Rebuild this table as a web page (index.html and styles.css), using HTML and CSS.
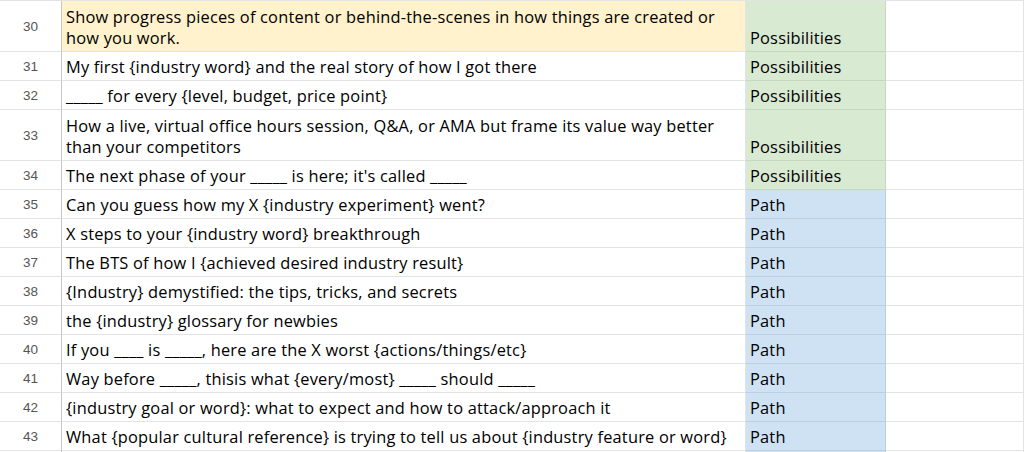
FILE: index.html
```html
<!DOCTYPE html>
<html>
<head>
<meta charset="utf-8">
<link rel="stylesheet" href="styles.css">
</head>
<body>
<div class="sheet">
  <div class="row tall"><div class="num">30</div><div class="cell yellow">Show progress pieces of content or behind-the-scenes in how things are created or how you work.</div><div class="cell green">Possibilities</div><div class="cell"></div></div>
  <div class="row"><div class="num">31</div><div class="cell">My first {industry word} and the real story of how I got there</div><div class="cell green">Possibilities</div><div class="cell"></div></div>
  <div class="row"><div class="num">32</div><div class="cell">_____ for every {level, budget, price point}</div><div class="cell green">Possibilities</div><div class="cell"></div></div>
  <div class="row tall"><div class="num">33</div><div class="cell">How a live, virtual office hours session, Q&amp;A, or AMA but frame its value way better than your competitors</div><div class="cell green">Possibilities</div><div class="cell"></div></div>
  <div class="row"><div class="num">34</div><div class="cell">The next phase of your _____ is here; it's called _____</div><div class="cell green">Possibilities</div><div class="cell"></div></div>
  <div class="row"><div class="num">35</div><div class="cell">Can you guess how my X {industry experiment} went?</div><div class="cell blue">Path</div><div class="cell"></div></div>
  <div class="row"><div class="num">36</div><div class="cell">X steps to your {industry word} breakthrough</div><div class="cell blue">Path</div><div class="cell"></div></div>
  <div class="row"><div class="num">37</div><div class="cell">The BTS of how I {achieved desired industry result}</div><div class="cell blue">Path</div><div class="cell"></div></div>
  <div class="row"><div class="num">38</div><div class="cell">{Industry} demystified: the tips, tricks, and secrets</div><div class="cell blue">Path</div><div class="cell"></div></div>
  <div class="row"><div class="num">39</div><div class="cell">the {industry} glossary for newbies</div><div class="cell blue">Path</div><div class="cell"></div></div>
  <div class="row"><div class="num">40</div><div class="cell">If you ____ is _____, here are the X worst {actions/things/etc}</div><div class="cell blue">Path</div><div class="cell"></div></div>
  <div class="row"><div class="num">41</div><div class="cell">Way before _____, thisis what {every/most} _____ should _____</div><div class="cell blue">Path</div><div class="cell"></div></div>
  <div class="row"><div class="num">42</div><div class="cell">{industry goal or word}: what to expect and how to attack/approach it</div><div class="cell blue">Path</div><div class="cell"></div></div>
  <div class="row"><div class="num">43</div><div class="cell">What {popular cultural reference} is trying to tell us about {industry feature or word}</div><div class="cell blue">Path</div><div class="cell"></div></div>
  <div class="row"><div class="num"></div><div class="cell"></div><div class="cell blue"></div><div class="cell"></div></div>
</div>
</body>
</html>
```
FILE: styles.css
```css
* { box-sizing: border-box; }
html, body { margin: 0; padding: 0; background: #fff; overflow: hidden; }
body { width: 1024px; height: 452px; }
.sheet {
  border-top: 1px solid #e2e3e3;
  display: flex;
  flex-direction: column;
  width: 1024px;
  height: 452px;
  overflow: hidden;
}
.row {
  display: grid;
  grid-template-columns: 62px 684px 140px 1fr;
  height: 29px;
  flex: none;
}
.row.tall { height: 51px; }
.num {
  display: flex;
  align-items: center;
  justify-content: center;
  font-family: "Liberation Sans", Arial, sans-serif;
  font-size: 13.5px;
  color: #555;
  border-right: 1px solid #c4c7c5;
  border-bottom: 1px solid #e2e3e3;
  background: #fff;
}
.cell {
  display: flex;
  align-items: flex-end;
  padding: 0 4px 3px 4px;
  font-family: "Open Sans", "Lato", sans-serif;
  font-size: 16.4px;
  letter-spacing: 0.2px;
  line-height: 21px;
  color: #000;
  border-right: 1px solid #e2e3e3;
  border-bottom: 1px solid #e2e3e3;
  overflow: hidden;
  white-space: normal;
}
.yellow { background: #fff2cc; }
.green { background: #d9ead3; border-color: #c5d9bd; }
.blue { background: #cfe2f3; border-color: #bccfe0; }
```
